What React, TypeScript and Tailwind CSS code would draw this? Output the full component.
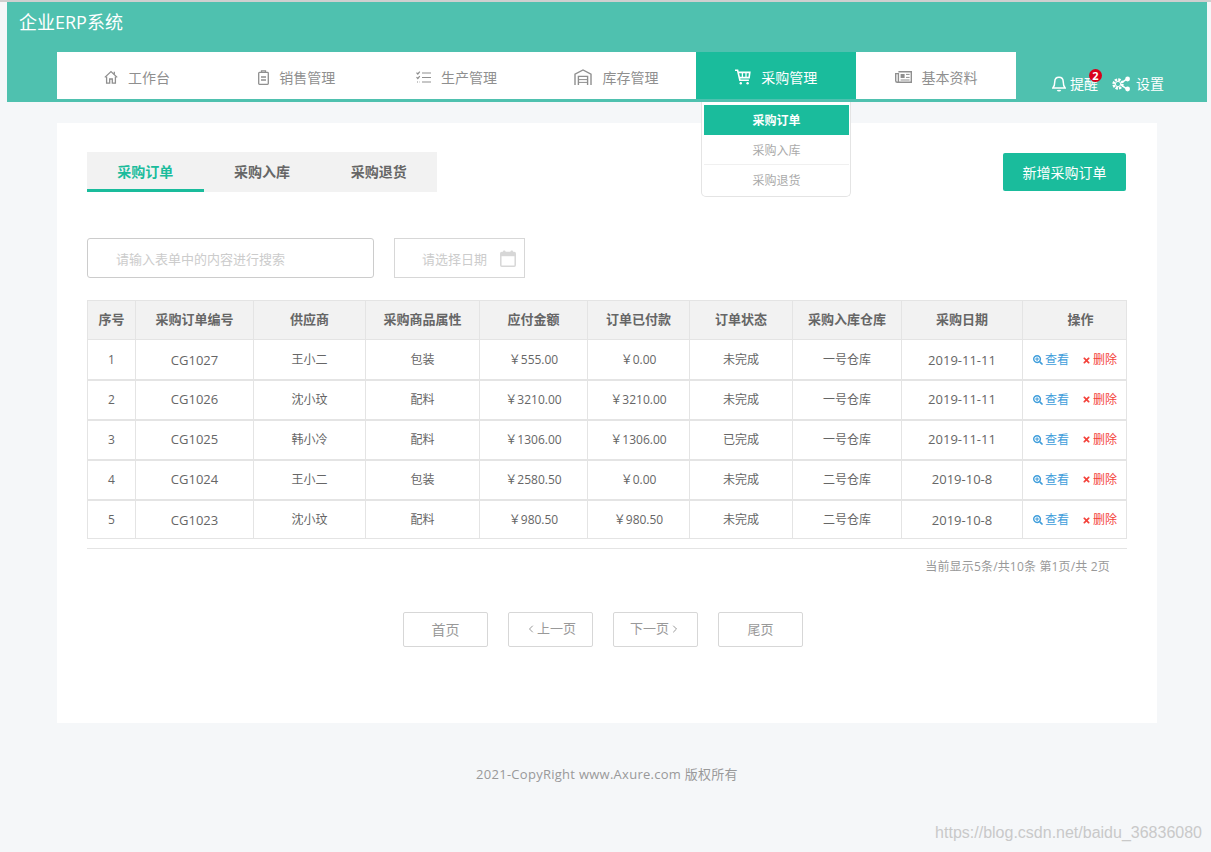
import React from 'react';
import { ChevronLeft, ChevronRight } from 'lucide-react';
import { FaSearchPlus, FaTimes } from 'react-icons/fa';

const HomeIcon = () => (
  <svg width="14" height="14" viewBox="0 0 14 14" fill="none" stroke="currentColor" strokeWidth="1.3">
    <path d="M0.8 7.4 7 1.6l6.2 5.8" />
    <path d="M10.3 4.6V1.8" />
    <path d="M2.6 6.4v6.8h3.1V9h2.6v4.2h3.1V6.4" />
  </svg>
);

const ClipboardIcon = () => (
  <svg width="11" height="15" viewBox="0 0 11 15" fill="none" stroke="currentColor" strokeWidth="1.3">
    <rect x="0.7" y="2.4" width="9.6" height="11.9" rx="0.8" />
    <path d="M3.5 2.2V0.8h4v1.4" />
    <path d="M3 7h5M3 10h5" />
  </svg>
);

const ListIcon = () => (
  <svg width="15" height="13" viewBox="0 0 15 13" fill="none" stroke="currentColor" strokeWidth="1.2">
    <path d="M6 2h9M6 6.5h9M6 11h9" />
    <path d="M0.5 1.6 1.8 3 3.8 0.6M0.5 6.2 1.8 7.5 3.8 5.2" />
    <path d="M1 11h2.5" strokeDasharray="1 1" />
  </svg>
);

const WarehouseIcon = () => (
  <svg width="18" height="16" viewBox="0 0 18 16" fill="none" stroke="currentColor" strokeWidth="1.4">
    <path d="M1 16V5.2L9 1l8 4.2V16" />
    <path d="M4.4 16V7.4h9.2V16" />
    <path d="M4.4 10.6h9.2M4.4 13.4h9.2" strokeWidth="1" />
  </svg>
);

const CartIcon = () => (
  <svg width="16" height="16" viewBox="0 0 16 16" fill="none" stroke="currentColor" strokeWidth="1.6">
    <path d="M0 1.2h2.6l2.3 10h9" />
    <path d="M3.4 3.4h11.4l-.7 5.2H4.6" />
    <path d="M7.4 3.4v5.2M11 3.4v5.2" strokeWidth="1.3" />
    <circle cx="5.8" cy="14.2" r="1.2" fill="currentColor" stroke="none" />
    <circle cx="12.6" cy="14.2" r="1.2" fill="currentColor" stroke="none" />
  </svg>
);

const PaperIcon = () => (
  <svg width="17" height="12" viewBox="0 0 17 12" fill="none" stroke="currentColor" strokeWidth="1.4">
    <path d="M3.4 0.8h12.9v10.4H2.2A1.5 1.5 0 0 1 0.7 9.7V2.6h2.7v8.4" />
    <rect x="5.6" y="3" width="4" height="4" fill="currentColor" stroke="none" />
    <path d="M11 3.4h3.6M11 6.4h3.6M5.6 9h9" strokeWidth="1" />
  </svg>
);

const BellIcon = () => (
  <svg width="14" height="16" viewBox="0 0 14 16" fill="none" stroke="currentColor" strokeWidth="1.5">
    <path d="M7 1.2c-2.6 0-4.2 2-4.2 4.4 0 3.6-.6 5-2 6.4h12.4c-1.4-1.4-2-2.8-2-6.4 0-2.4-1.6-4.4-4.2-4.4z" />
    <path d="M5.4 14.2c.4.7 2.8.7 3.2 0" />
  </svg>
);

const SettingsIcon = () => (
  <svg width="19" height="16" viewBox="0 0 19 16" fill="none" stroke="currentColor">
    <circle cx="6" cy="8" r="4.4" strokeWidth="2.6" strokeDasharray="2.4 1" />
    <circle cx="6" cy="8" r="2.6" strokeWidth="1" />
    <path d="M10 6.4l4.4-3M10 9.6l4.4 3" strokeWidth="1.6" />
    <circle cx="15.6" cy="3" r="2.4" fill="currentColor" stroke="none" />
    <circle cx="15.6" cy="13" r="2.4" fill="currentColor" stroke="none" />
  </svg>
);

const CalendarIcon = () => (
  <svg width="16" height="17" viewBox="0 0 16 17" fill="none" className="ml-[13px]">
    <rect x="0.8" y="2.6" width="14.4" height="13.6" rx="1" stroke="#d7d7d7" strokeWidth="1.5" />
    <rect x="0.8" y="2.6" width="14.4" height="3.6" fill="#d7d7d7" />
    <rect x="3" y="0.4" width="2.4" height="4" rx="0.8" fill="#d7d7d7" />
    <rect x="10.6" y="0.4" width="2.4" height="4" rx="0.8" fill="#d7d7d7" />
  </svg>
);

const navItems = [
  { label: '工作台', icon: HomeIcon },
  { label: '销售管理', icon: ClipboardIcon },
  { label: '生产管理', icon: ListIcon },
  { label: '库存管理', icon: WarehouseIcon },
  { label: '采购管理', icon: CartIcon, active: true },
  { label: '基本资料', icon: PaperIcon },
];

const columns = [
  { title: '序号', width: 'w-[48px]' },
  { title: '采购订单编号', width: 'w-[118px]' },
  { title: '供应商', width: 'w-[112px]' },
  { title: '采购商品属性', width: 'w-[114px]' },
  { title: '应付金额', width: 'w-[108px]' },
  { title: '订单已付款', width: 'w-[102px]' },
  { title: '订单状态', width: 'w-[103px]' },
  { title: '采购入库仓库', width: 'w-[109px]' },
  { title: '采购日期', width: 'w-[121px]' },
  { title: '操作', width: 'w-[104px] pl-[12px]' },
];

const rows = [
  ['1', 'CG1027', '王小二', '包装', '￥555.00', '￥0.00', '未完成', '一号仓库', '2019-11-11'],
  ['2', 'CG1026', '沈小玟', '配料', '￥3210.00', '￥3210.00', '未完成', '一号仓库', '2019-11-11'],
  ['3', 'CG1025', '韩小冷', '配料', '￥1306.00', '￥1306.00', '已完成', '一号仓库', '2019-11-11'],
  ['4', 'CG1024', '王小二', '包装', '￥2580.50', '￥0.00', '未完成', '二号仓库', '2019-10-8'],
  ['5', 'CG1023', '沈小玟', '配料', '￥980.50', '￥980.50', '未完成', '二号仓库', '2019-10-8'],
];

const tabs = ['采购订单', '采购入库', '采购退货'];
const font = "font-['Open_Sans','Noto_Sans_CJK_SC',sans-serif]";

const App: React.FC = () => {
  return (
    <div className={`${font} relative h-[852px] w-[1211px] overflow-hidden bg-[#f5f7f9] border-t-2 border-[#cfcfcf]`}>
      {/* header */}
      <header className="relative ml-[7px] h-[100px] w-[1200px] bg-[#4fc1af]">
        <div className="pl-[12px] pt-[8px] text-[18px] leading-[24px] text-white">企业ERP系统</div>
        <div className="mt-[18px] ml-[50px] flex items-end">
          <nav className="flex h-[47px] w-[959px] bg-white">
            {navItems.map((item) => {
              const Icon = item.icon;
              return (
                <div
                  key={item.label}
                  className={`flex h-full flex-1 items-center justify-center gap-[10px] pt-[3px] text-[14px] ${item.active ? 'bg-[#1abc9c] text-white' : 'text-[#8f8f8f]'}`}
                >
                  <Icon />
                  <span>{item.label}</span>
                </div>
              );
            })}
          </nav>
          <div className="ml-[36px] flex items-center pb-[5px] text-[14px] text-white">
            <div className="relative flex items-center gap-[4px]">
              <BellIcon />
              <span>提醒</span>
              <span className="absolute left-[37px] top-[-4px] flex h-[13px] w-[13px] items-center justify-center rounded-full bg-[#d9001b] text-[11px] font-bold leading-none text-white">2</span>
            </div>
            <div className="ml-[14px] flex items-center gap-[5px]">
              <SettingsIcon />
              <span>设置</span>
            </div>
          </div>
        </div>

        {/* dropdown */}
        <div className="absolute left-[694px] top-[100px] z-10 w-[150px] rounded-b-[5px] border border-t-0 border-[#e4e4e4] bg-white pl-[2px] pr-[1px] pt-[3px] pb-[1px] text-center text-[12px] text-[#aaa]">
          <div className="flex h-[30px] items-center justify-center bg-[#1abc9c] pt-[1px] font-bold text-white">采购订单</div>
          <div className="flex h-[30px] items-center justify-center border-b border-[#f0f0f0] pt-[2px]">采购入库</div>
          <div className="flex h-[30px] items-center justify-center pt-[1px]">采购退货</div>
        </div>
      </header>

      {/* content card */}
      <main className="ml-[57px] mt-[21px] h-[600px] w-[1100px] bg-white px-[30px] pt-[29px]">
        <div className="flex items-start justify-between pr-[1px]">
          <div className="flex h-[40px] w-[350px] bg-[#f2f2f2] text-[14px] font-bold text-[#666]">
            {tabs.map((t, i) => (
              <div
                key={t}
                className={`flex w-[117px] items-center justify-center pt-[1px] ${i === 0 ? 'border-b-[3px] border-[#1abc9c] text-[#1abc9c]' : 'pb-[3px]'}`}
              >
                {t}
              </div>
            ))}
          </div>
          <button className="mt-[1px] flex h-[38px] w-[123px] items-center justify-center rounded-[2px] bg-[#1abc9c] text-[14px] text-white">
            新增采购订单
          </button>
        </div>

        <div className="mt-[46px] flex gap-[20px] text-[13px] text-[#ccc]">
          <div className="flex h-[40px] w-[287px] items-center rounded-[3px] border border-[#ccc] pl-[28px] pt-[3px]">请输入表单中的内容进行搜索</div>
          <div className="flex h-[40px] w-[131px] items-center border border-[#d7d7d7] pl-[27px]">
            <span className="pt-[3px]">请选择日期</span>
            <CalendarIcon />
          </div>
        </div>

        <table className="mt-[22px] w-[1039px] table-fixed border-collapse text-center text-[12px] text-[#666]">
          <thead>
            <tr className="h-[39px] bg-[#f2f2f2] text-[13px] font-bold">
              {columns.map((c) => (
                <th key={c.title} className={`${c.width} border border-[#e4e4e4]`}>{c.title}</th>
              ))}
            </tr>
          </thead>
          <tbody>
            {rows.map((r, rowIdx) => {
              const last = rowIdx === rows.length - 1;
              const cell = `${last ? 'border' : 'border border-b-2'} border-[#e4e4e4] ${rowIdx === 0 || last ? 'pt-[2px]' : ''}`;
              return (
                <tr key={r[0]} className={last ? 'h-[39px]' : 'h-[40px]'}>
                  {r.map((v, i) => (
                    <td key={i} className={`${cell} ${i === 1 || i === 8 ? 'text-[13px]' : ''}`}>{v}</td>
                  ))}
                  <td className={cell}>
                    <div className="flex items-center justify-center gap-[13px] pl-[1px]">
                      <span className="flex items-center gap-[2px] text-[#3e9ddb]"><FaSearchPlus size={10} />查看</span>
                      <span className="flex items-center gap-[2px] text-[#f4423a]"><FaTimes size={9} />删除</span>
                    </div>
                  </td>
                </tr>
              );
            })}
          </tbody>
        </table>

        <div className="mt-[9px] h-[36px] w-[1040px] border-t border-[#e4e4e4] pr-[17px] pt-[9px] text-right text-[12px] tracking-[0.17px] text-[#999]">
          当前显示5条/共10条 第1页/共 2页
        </div>

        <div className="mt-[28px] flex justify-center gap-[20px] pr-[8px] text-[13px] text-[#999]">
          <div className="flex h-[35px] w-[85px] items-center justify-center rounded-[2px] border border-[#d7d7d7] text-[14px]">首页</div>
          <div className="flex h-[35px] w-[85px] items-center justify-center rounded-[2px] border border-[#d7d7d7] pb-[2px]"><ChevronLeft size={12} />上一页</div>
          <div className="flex h-[35px] w-[85px] items-center justify-center rounded-[2px] border border-[#d7d7d7] pb-[2px]">下一页<ChevronRight size={12} /></div>
          <div className="flex h-[35px] w-[85px] items-center justify-center rounded-[2px] border border-[#d7d7d7]">尾页</div>
        </div>
      </main>

      <footer className="ml-[57px] mt-[42px] w-[1100px] text-center text-[13px] tracking-[0.27px] text-[#999]">2021-CopyRight www.Axure.com 版权所有</footer>
      <div className="absolute bottom-[7px] right-[9px] text-[16px] text-[#c9c9c9] font-['Liberation_Sans',sans-serif]">https://blog.csdn.net/baidu_36836080</div>
    </div>
  );
};

export default App;
